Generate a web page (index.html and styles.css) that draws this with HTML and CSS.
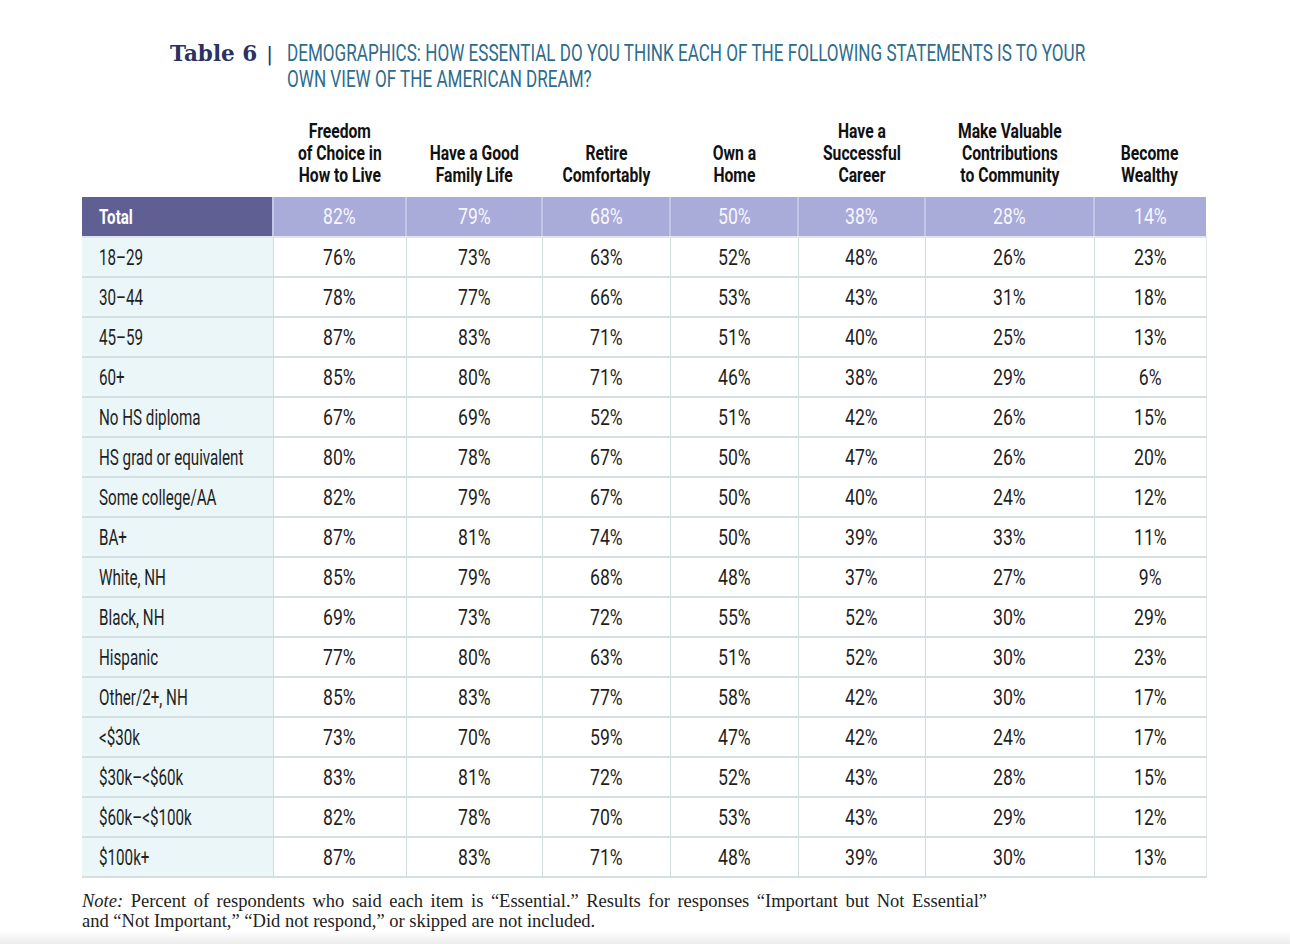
FILE: index.html
```html
<!DOCTYPE html>
<html lang="en">
<head>
<meta charset="utf-8">
<title>Table 6</title>
<link rel="stylesheet" href="styles.css">
</head>
<body>
<div class="page">
  <header class="title">
    <span class="tnum">Table 6</span>
    <span class="bar">|</span>
    <h1 class="heading"><span class="cx">DEMOGRAPHICS: HOW ESSENTIAL DO YOU THINK EACH OF THE FOLLOWING STATEMENTS IS TO YOUR<br>OWN VIEW OF THE AMERICAN DREAM?</span></h1>
  </header>

  <table class="data">
    <colgroup>
      <col class="c-label">
      <col class="c1"><col class="c2"><col class="c3"><col class="c4"><col class="c5"><col class="c6"><col class="c7">
    </colgroup>
    <thead>
      <tr>
        <th class="blank"></th>
        <th><span class="cx">Freedom<br>of Choice in<br>How to Live</span></th>
        <th><span class="cx">Have a Good<br>Family Life</span></th>
        <th><span class="cx">Retire<br>Comfortably</span></th>
        <th><span class="cx">Own a<br>Home</span></th>
        <th><span class="cx">Have a<br>Successful<br>Career</span></th>
        <th><span class="cx">Make Valuable<br>Contributions<br>to Community</span></th>
        <th><span class="cx">Become<br>Wealthy</span></th>
      </tr>
    </thead>
    <tbody>
      <tr class="total"><th><span class="cx">Total</span></th><td><span class="cx">82%</span></td><td><span class="cx">79%</span></td><td><span class="cx">68%</span></td><td><span class="cx">50%</span></td><td><span class="cx">38%</span></td><td><span class="cx">28%</span></td><td><span class="cx">14%</span></td></tr>
      <tr><th><span class="cx">18–29</span></th><td><span class="cx">76%</span></td><td><span class="cx">73%</span></td><td><span class="cx">63%</span></td><td><span class="cx">52%</span></td><td><span class="cx">48%</span></td><td><span class="cx">26%</span></td><td><span class="cx">23%</span></td></tr>
      <tr><th><span class="cx">30–44</span></th><td><span class="cx">78%</span></td><td><span class="cx">77%</span></td><td><span class="cx">66%</span></td><td><span class="cx">53%</span></td><td><span class="cx">43%</span></td><td><span class="cx">31%</span></td><td><span class="cx">18%</span></td></tr>
      <tr><th><span class="cx">45–59</span></th><td><span class="cx">87%</span></td><td><span class="cx">83%</span></td><td><span class="cx">71%</span></td><td><span class="cx">51%</span></td><td><span class="cx">40%</span></td><td><span class="cx">25%</span></td><td><span class="cx">13%</span></td></tr>
      <tr><th><span class="cx">60+</span></th><td><span class="cx">85%</span></td><td><span class="cx">80%</span></td><td><span class="cx">71%</span></td><td><span class="cx">46%</span></td><td><span class="cx">38%</span></td><td><span class="cx">29%</span></td><td><span class="cx">6%</span></td></tr>
      <tr><th><span class="cx">No HS diploma</span></th><td><span class="cx">67%</span></td><td><span class="cx">69%</span></td><td><span class="cx">52%</span></td><td><span class="cx">51%</span></td><td><span class="cx">42%</span></td><td><span class="cx">26%</span></td><td><span class="cx">15%</span></td></tr>
      <tr><th><span class="cx">HS grad or equivalent</span></th><td><span class="cx">80%</span></td><td><span class="cx">78%</span></td><td><span class="cx">67%</span></td><td><span class="cx">50%</span></td><td><span class="cx">47%</span></td><td><span class="cx">26%</span></td><td><span class="cx">20%</span></td></tr>
      <tr><th><span class="cx">Some college/AA</span></th><td><span class="cx">82%</span></td><td><span class="cx">79%</span></td><td><span class="cx">67%</span></td><td><span class="cx">50%</span></td><td><span class="cx">40%</span></td><td><span class="cx">24%</span></td><td><span class="cx">12%</span></td></tr>
      <tr><th><span class="cx">BA+</span></th><td><span class="cx">87%</span></td><td><span class="cx">81%</span></td><td><span class="cx">74%</span></td><td><span class="cx">50%</span></td><td><span class="cx">39%</span></td><td><span class="cx">33%</span></td><td><span class="cx">11%</span></td></tr>
      <tr><th><span class="cx">White, NH</span></th><td><span class="cx">85%</span></td><td><span class="cx">79%</span></td><td><span class="cx">68%</span></td><td><span class="cx">48%</span></td><td><span class="cx">37%</span></td><td><span class="cx">27%</span></td><td><span class="cx">9%</span></td></tr>
      <tr><th><span class="cx">Black, NH</span></th><td><span class="cx">69%</span></td><td><span class="cx">73%</span></td><td><span class="cx">72%</span></td><td><span class="cx">55%</span></td><td><span class="cx">52%</span></td><td><span class="cx">30%</span></td><td><span class="cx">29%</span></td></tr>
      <tr><th><span class="cx">Hispanic</span></th><td><span class="cx">77%</span></td><td><span class="cx">80%</span></td><td><span class="cx">63%</span></td><td><span class="cx">51%</span></td><td><span class="cx">52%</span></td><td><span class="cx">30%</span></td><td><span class="cx">23%</span></td></tr>
      <tr><th><span class="cx">Other/2+, NH</span></th><td><span class="cx">85%</span></td><td><span class="cx">83%</span></td><td><span class="cx">77%</span></td><td><span class="cx">58%</span></td><td><span class="cx">42%</span></td><td><span class="cx">30%</span></td><td><span class="cx">17%</span></td></tr>
      <tr><th><span class="cx">&lt;$30k</span></th><td><span class="cx">73%</span></td><td><span class="cx">70%</span></td><td><span class="cx">59%</span></td><td><span class="cx">47%</span></td><td><span class="cx">42%</span></td><td><span class="cx">24%</span></td><td><span class="cx">17%</span></td></tr>
      <tr><th><span class="cx">$30k–&lt;$60k</span></th><td><span class="cx">83%</span></td><td><span class="cx">81%</span></td><td><span class="cx">72%</span></td><td><span class="cx">52%</span></td><td><span class="cx">43%</span></td><td><span class="cx">28%</span></td><td><span class="cx">15%</span></td></tr>
      <tr><th><span class="cx">$60k–&lt;$100k</span></th><td><span class="cx">82%</span></td><td><span class="cx">78%</span></td><td><span class="cx">70%</span></td><td><span class="cx">53%</span></td><td><span class="cx">43%</span></td><td><span class="cx">29%</span></td><td><span class="cx">12%</span></td></tr>
      <tr><th><span class="cx">$100k+</span></th><td><span class="cx">87%</span></td><td><span class="cx">83%</span></td><td><span class="cx">71%</span></td><td><span class="cx">48%</span></td><td><span class="cx">39%</span></td><td><span class="cx">30%</span></td><td><span class="cx">13%</span></td></tr>
    </tbody>
  </table>

  <p class="note"><span class="note-line"><em>Note:</em> Percent of respondents who said each item is “Essential.” Results for responses “Important but Not Essential”</span>and “Not Important,” “Did not respond,” or skipped are not included.</p>
</div>
<div class="fade"></div>
</body>
</html>
```

FILE: styles.css
```css
html, body {
  margin: 0;
  padding: 0;
  background: #ffffff;
  overflow-x: hidden;
}

.page {
  padding: 41px 0 0 82px;
  font-family: Roboto, "Noto Sans", "DejaVu Sans", sans-serif;
}

/* condensed-type emulation: the reference uses a narrow gothic face */
.cx {
  display: inline-block;
  white-space: nowrap;
  transform: scaleX(0.8);
}

/* ---------- title ---------- */
.title {
  display: flex;
  align-items: flex-start;
  margin-left: 88px;
  height: 52px;
}

.tnum {
  font-family: "DejaVu Serif", "Liberation Serif", serif;
  font-weight: bold;
  font-size: 21.5px;
  line-height: 26px;
  color: #2a3262;
  white-space: nowrap;
}

.bar {
  font-family: "DejaVu Sans", sans-serif;
  font-size: 20px;
  line-height: 26px;
  color: #2a3262;
  margin: 0 14px 0 9px;
}

.heading {
  margin: 0;
  width: 820px;
  height: 52px;
  overflow: hidden;
  font-weight: normal;
  font-size: 23px;
  line-height: 26px;
  color: #2d6c8c;
}

.heading .cx {
  transform: scaleX(0.743);
  transform-origin: left top;
}

/* ---------- table ---------- */
.data {
  margin-top: 27px;
  border-collapse: collapse;
  table-layout: fixed;
  width: 1124px;
  font-size: 22px;
  color: #1f1f1f;
}

.c-label { width: 191px; }
.c1 { width: 133px; }
.c2 { width: 136px; }
.c3 { width: 128px; }
.c4 { width: 128px; }
.c5 { width: 127px; }
.c6 { width: 169px; }
.c7 { width: 112px; }

.data thead th {
  vertical-align: bottom;
  text-align: center;
  font-weight: bold;
  font-size: 20.5px;
  line-height: 22px;
  padding: 0 0 11px 0;
  color: #111111;
}

.data thead .cx {
  transform: scaleX(0.765);
  transform-origin: center bottom;
}

.data tbody tr {
  height: 40px;
}

.data tbody th {
  text-align: left;
  font-weight: normal;
  padding: 0 0 0 17px;
  background: #eaf6f8;
  border-bottom: 2px solid #d4dfe2;
  overflow: visible;
}

.data tbody th .cx {
  transform: scaleX(0.69);
  transform-origin: left center;
}

.data tbody td {
  text-align: center;
  padding: 0;
  border-bottom: 2px solid #d4dfe2;
  border-left: 1px solid #d3dadd;
}

.data tbody td:last-child {
  border-right: 1px solid #e2e8ea;
}

.data tbody tr.total th {
  background: #5f5f94;
  color: #ffffff;
  font-weight: bold;
  font-size: 21px;
  border-bottom: 2px solid #dfe6ea;
}

.data tbody tr.total th .cx {
  transform: scaleX(0.72);
}

.data tbody tr.total td {
  background: #a9abd9;
  color: #f7f7ff;
  border-left: 2px solid #c4c6e8;
  border-bottom: 2px solid #dfe6ea;
}

.data tbody tr.total td:last-child {
  border-right: 0;
}

/* ---------- note ---------- */
.note {
  margin: 13px 0 0 0;
  font-family: "Liberation Serif", "DejaVu Serif", serif;
  font-size: 18.5px;
  line-height: 20px;
  color: #222222;
}

.note-line {
  display: block;
  width: 905px;
  text-align: justify;
  text-align-last: justify;
}

.fade {
  height: 14px;
  background: linear-gradient(#ffffff, #ebebeb);
}
```
